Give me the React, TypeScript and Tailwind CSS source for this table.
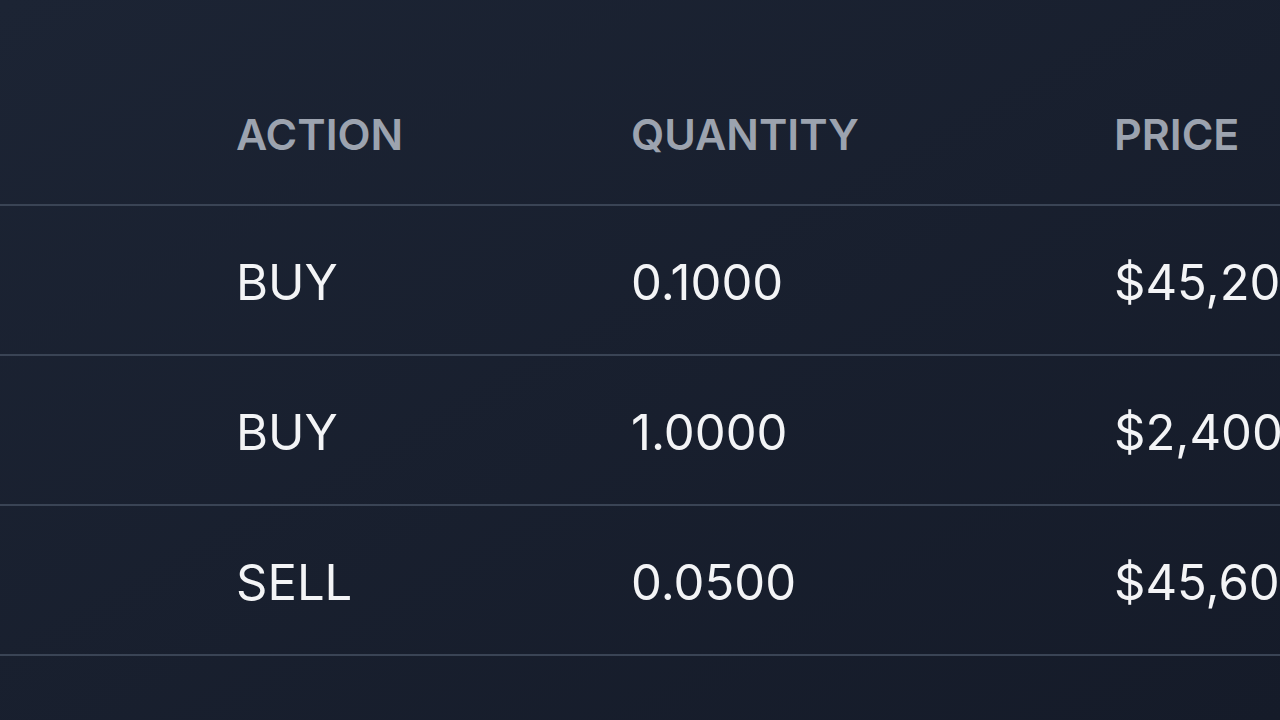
const rows = [
  { action: "BUY", qty: "0.1000", price: "$45,200.00" },
  { action: "BUY", qty: "1.0000", price: "$2,400.00" },
  { action: "SELL", qty: "0.0500", price: "$45,600.00" },
];

export default function App() {
  return (
    <div
      className="w-[1280px] h-[720px] overflow-hidden bg-gradient-to-br from-[#1c2434] to-[#151b29] pt-[58px]"
      style={{ fontFamily: "Inter, 'Noto Sans', sans-serif" }}
    >
      <div className="grid grid-cols-[395px_483px_1fr] pl-[236px] pt-[6px] h-[148px] items-center border-b-2 border-[#3a4455] whitespace-nowrap">
        <div className="text-[43px] font-semibold text-[#9ca3af] uppercase">Action</div>
        <div className="text-[43px] font-semibold text-[#9ca3af] uppercase">Quantity</div>
        <div className="text-[43px] font-semibold text-[#9ca3af] uppercase">Price</div>
      </div>
      {rows.map((r, i) => (
        <div
          key={i}
          className="grid grid-cols-[395px_483px_1fr] pl-[236px] pt-[6px] h-[150px] items-center border-b-2 border-[#3a4455] whitespace-nowrap text-[49px] text-[#f3f4f6]"
        >
          <div>{r.action}</div>
          <div>{r.qty}</div>
          <div>{r.price}</div>
        </div>
      ))}
    </div>
  );
}
